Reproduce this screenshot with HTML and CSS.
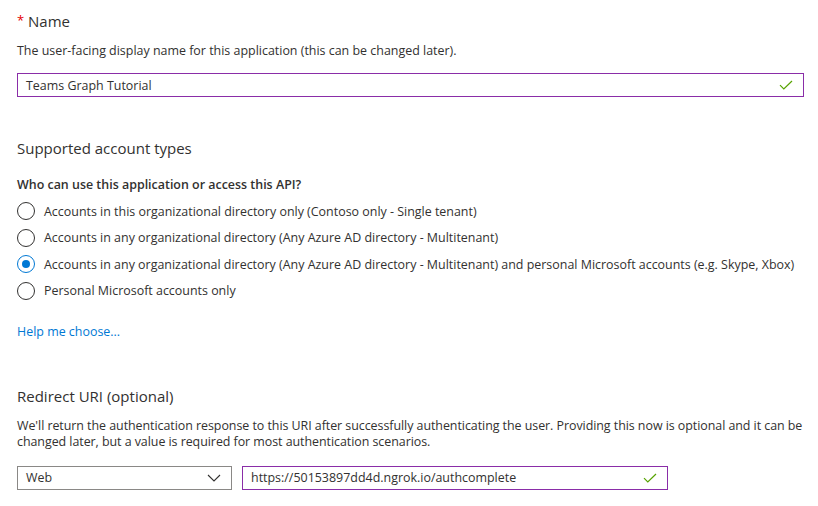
FILE: index.html
```html
<!DOCTYPE html>
<html lang="en">
<head>
<meta charset="utf-8">
<title>Register an application</title>
<link rel="stylesheet" href="styles.css">
</head>
<body>
<main class="form">
  <section class="section name-section">
    <h2 class="heading"><span class="req">*</span> Name</h2>
    <p class="desc">The user-facing display name for this application (this can be changed later).</p>
    <div class="textbox valid full">
      <span class="value">Teams Graph Tutorial</span>
      <svg class="check" width="14" height="10" viewBox="0 0 14 10"><path d="M1 5.2 L4.8 9 L13 1" fill="none" stroke="#57a300" stroke-width="1.2"/></svg>
    </div>
  </section>

  <section class="section accounts-section">
    <h2 class="heading">Supported account types</h2>
    <p class="question">Who can use this application or access this API?</p>
    <ul class="radios">
      <li class="radio"><span class="circle"></span>Accounts in this organizational directory only (Contoso only - Single tenant)</li>
      <li class="radio"><span class="circle"></span>Accounts in any organizational directory (Any Azure AD directory - Multitenant)</li>
      <li class="radio"><span class="circle checked"></span>Accounts in any organizational directory (Any Azure AD directory - Multitenant) and personal Microsoft accounts (e.g. Skype, Xbox)</li>
      <li class="radio"><span class="circle"></span>Personal Microsoft accounts only</li>
    </ul>
    <a class="link" href="#">Help me choose...</a>
  </section>

  <section class="section redirect-section">
    <h2 class="heading">Redirect URI (optional)</h2>
    <p class="desc two">We'll return the authentication response to this URI after successfully authenticating the user. Providing this now is optional and it can be changed later, but a value is required for most authentication scenarios.</p>
    <div class="row">
      <div class="select">
        <span class="value">Web</span>
        <svg class="chevron" width="14" height="8" viewBox="0 0 14 8"><path d="M1 1 L7 7 L13 1" fill="none" stroke="#323130" stroke-width="1.1"/></svg>
      </div>
      <div class="textbox valid uri">
        <span class="value">https://50153897dd4d.ngrok.io/authcomplete</span>
        <svg class="check" width="14" height="10" viewBox="0 0 14 10"><path d="M1 5.2 L4.8 9 L13 1" fill="none" stroke="#57a300" stroke-width="1.2"/></svg>
      </div>
    </div>
  </section>
</main>
</body>
</html>
```

FILE: styles.css
```css
* { box-sizing: border-box; }
html, body { margin: 0; padding: 0; background: #fff; }
body {
  font-family: "Open Sans", "Noto Sans", "Liberation Sans", sans-serif;
  color: #323130;
  font-size: 12.45px;
}
.form { padding: 9px 15px 0 17px; width: 818px; }
.section { display: flex; flex-direction: column; }
.heading {
  margin: 0;
  font-weight: 400;
  font-size: 15px;
  line-height: 22px;
  color: #323130;
}
.req { color: #e50000; font-size: 13px; vertical-align: 2px; }
.desc { margin: 11px 0 0; font-size: 12.45px; line-height: 16px; }
.textbox, .select {
  height: 24px;
  border: 1px solid #8a8886;
  display: flex;
  align-items: center;
  justify-content: space-between;
  padding: 0 10px 0 8px;
  font-size: 12.45px;
}
.textbox.valid { border-color: #8a2da8; }
.full { margin-top: 14px; width: 787px; }
.accounts-section { margin-top: 40px; }
.question { margin: 18px 0 0; font-weight: 600; font-size: 12.45px; line-height: 16px; }
.radios { list-style: none; margin: 9px 0 0; padding: 0; display: flex; flex-direction: column; gap: 8.5px; }
.radio { display: flex; align-items: center; height: 18px; font-size: 12.45px; }
.circle {
  width: 18px; height: 18px; border-radius: 50%;
  border: 1px solid #323130;
  margin-right: 9px;
  position: relative;
  flex: none;
}
.circle.checked { border-color: #0078d4; }
.circle.checked::after {
  content: ""; position: absolute; left: 4px; top: 4px;
  width: 8px; height: 8px; border-radius: 50%; background: #0078d4;
}
.link { margin-top: 24px; color: #0078d4; text-decoration: none; font-size: 12.45px; line-height: 16px; align-self: flex-start; }
.redirect-section { margin-top: 45px; }
.desc.two { margin-top: 11px; margin-right: -12px; letter-spacing: -0.05px; }
.row { display: flex; gap: 10px; margin-top: 16px; }
.select { width: 215px; border-color: #8a8886; }
.uri { width: 426px; }
.check { flex: none; }
.chevron { flex: none; }
```
